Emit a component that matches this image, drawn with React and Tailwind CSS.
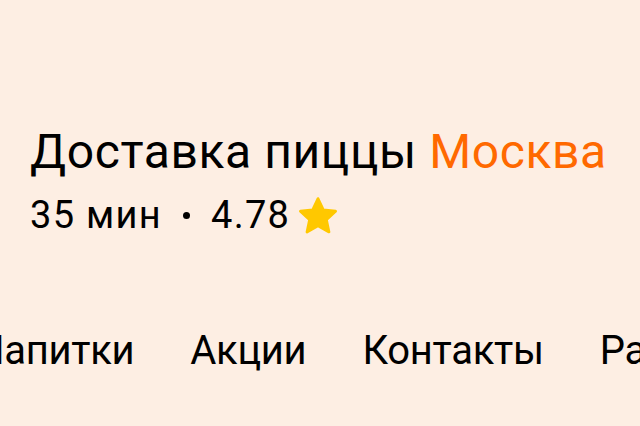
import React from 'react';

const navItems = ['Напитки', 'Акции', 'Контакты', 'Работа в Додо'];

const App = () => {
  return (
    <div
      className="h-[426px] w-[640px] overflow-hidden bg-[#fdeee3] text-black"
      style={{ fontFamily: 'Roboto, "Liberation Sans", sans-serif' }}
    >
      {/* City header */}
      <div className="pl-[30px] pt-[124px]">
        <h1 className="whitespace-nowrap text-[48px] leading-[56px] font-normal tracking-[0.6px]">
          Доставка пиццы <span className="text-[#ff6900]">Москва</span>
        </h1>
        <div className="mt-[12px] flex items-center whitespace-nowrap text-[38px] leading-[44px] tracking-[1.3px]">
          <span>35 мин</span>
          <span className="mx-[21px] inline-block h-[7px] w-[7px] rounded-full bg-black" />
          <span>4.78</span>
          <svg viewBox="0 0 24 24" className="ml-[6px] mt-[2px] h-[44px] w-[44px]">
            <path
              d="M12 2.5l2.9 6.2 6.7.7-5 4.6 1.4 6.7L12 17.3l-6 3.4 1.4-6.7-5-4.6 6.7-.7z"
              fill="#ffc800"
              stroke="#ffc800"
              strokeWidth="1.5"
              strokeLinejoin="round"
            />
          </svg>
        </div>
      </div>

      {/* Category nav, scrolled sideways */}
      <nav className="mt-[89px] overflow-hidden whitespace-nowrap">
        <ul className="ml-[-24px] flex gap-[56px] text-[40px] leading-[48px] tracking-[-0.3px]">
          {navItems.map((item) => (
            <li key={item}>{item}</li>
          ))}
        </ul>
      </nav>
    </div>
  );
};

export default App;
